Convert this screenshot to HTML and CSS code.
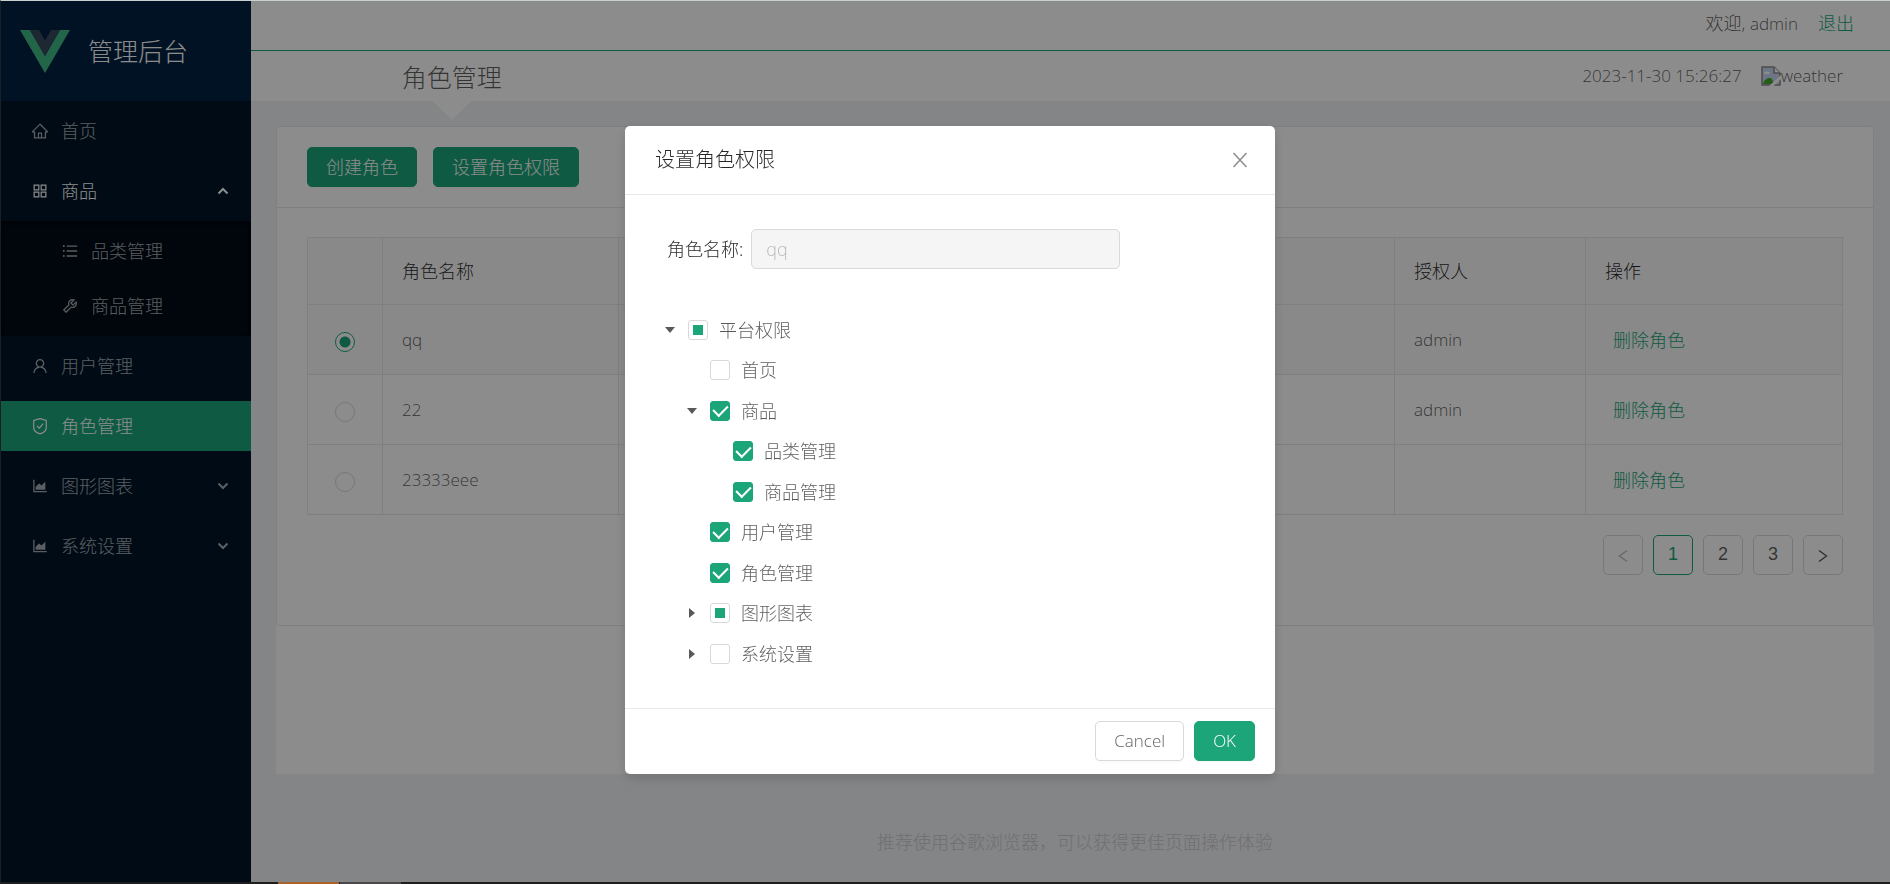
FILE: index.html
```html
<!DOCTYPE html>
<html lang="zh-CN">
<head>
<meta charset="utf-8">
<title>管理后台</title>
<link rel="stylesheet" href="styles.css">
</head>
<body>
<svg class="sprite" aria-hidden="true">
  <symbol id="home" viewBox="0 0 1024 1024"><path d="M946.500 505L560.100 118.800l-25.900-25.900a31.500 31.500 0 0 0-44.400 0L77.500 505a63.900 63.900 0 0 0-18.800 46c.4 35.200 29.700 63.300 64.900 63.300h42.500V940h691.800V614.300h43.400c17.100 0 33.200-6.700 45.300-18.800a63.600 63.600 0 0 0 18.700-45.300c0-17-6.700-33.100-18.800-45.200zM568 868H456V664h112v204zm217.900-325.700V868H632V640c0-22.100-17.900-40-40-40H432c-22.100 0-40 17.900-40 40v228H238.100V542.300h-96l370-369.700 23.100 23.100L882 542.300h-96.100z"/></symbol>
  <symbol id="apps" viewBox="0 0 1024 1024"><path d="M464 144H160c-8.800 0-16 7.200-16 16v304c0 8.800 7.200 16 16 16h304c8.800 0 16-7.200 16-16V160c0-8.800-7.200-16-16-16zm-52 268H212V212h200v200zm452-268H560c-8.800 0-16 7.200-16 16v304c0 8.800 7.200 16 16 16h304c8.800 0 16-7.200 16-16V160c0-8.800-7.200-16-16-16zm-52 268H612V212h200v200zM464 544H160c-8.800 0-16 7.200-16 16v304c0 8.800 7.200 16 16 16h304c8.800 0 16-7.200 16-16V560c0-8.800-7.200-16-16-16zm-52 268H212V612h200v200zm452-268H560c-8.800 0-16 7.200-16 16v304c0 8.800 7.200 16 16 16h304c8.800 0 16-7.200 16-16V560c0-8.800-7.200-16-16-16zm-52 268H612V612h200v200z"/></symbol>
  <symbol id="list" viewBox="0 0 1024 1024"><path d="M912 192H328c-4.400 0-8 3.600-8 8v56c0 4.400 3.600 8 8 8h584c4.400 0 8-3.600 8-8v-56c0-4.400-3.600-8-8-8zm0 284H328c-4.400 0-8 3.600-8 8v56c0 4.400 3.600 8 8 8h584c4.400 0 8-3.600 8-8v-56c0-4.400-3.600-8-8-8zm0 284H328c-4.400 0-8 3.600-8 8v56c0 4.400 3.600 8 8 8h584c4.400 0 8-3.600 8-8v-56c0-4.400-3.600-8-8-8zM104 228a56 56 0 1 0 112 0 56 56 0 1 0-112 0zm0 284a56 56 0 1 0 112 0 56 56 0 1 0-112 0zm0 284a56 56 0 1 0 112 0 56 56 0 1 0-112 0z"/></symbol>
  <symbol id="tool" viewBox="0 0 1024 1024"><path d="M876.600 239.500c-.5-.9-1.200-1.800-2-2.500-5-5-13.100-5-18.100 0L684.200 409.300l-67.900-67.900L788.700 169c.8-.8 1.400-1.600 2-2.500 3.600-6.100 1.600-13.900-4.500-17.500-98.200-58-226.800-44.700-311.300 39.700-67 67-89.200 162-66.500 247.400l-293 293c-3 3-2.800 7.900.3 11l169.700 169.700c3.100 3.100 8.100 3.300 11 .3l292.900-292.900c85.500 22.800 180.500.7 247.600-66.400 84.400-84.500 97.700-213.100 39.700-311.300zM786 499.800c-58.100 58.100-145.300 69.300-214.600 33.600l-8.800 8.800-.1-.1-274 274.100-79.200-79.200 230.100-230.100s0 .1.1.1l52.800-52.800c-35.700-69.300-24.500-156.500 33.600-214.600a184.200 184.200 0 0 1 144-53.500L537 318.900a32.050 32.050 0 0 0 0 45.300l124.500 124.500a32.050 32.050 0 0 0 45.300 0l132.800-132.800c3.700 51.800-14.400 104.800-53.600 143.900z"/></symbol>
  <symbol id="user" viewBox="0 0 1024 1024"><path d="M858.500 763.600a374 374 0 0 0-80.600-119.500 375.630 375.630 0 0 0-119.500-80.600c-.4-.2-.8-.3-1.200-.5C719.500 518 760 444.700 760 362c0-137-111-248-248-248S264 225 264 362c0 82.700 40.500 156 102.800 201.100-.4.2-.8.3-1.200.5-44.800 18.900-85 46-119.500 80.600a375.630 375.630 0 0 0-80.600 119.500A371.700 371.700 0 0 0 136 901.800a8 8 0 0 0 8 8.200h60c4.400 0 7.900-3.500 8-7.800 2-77.200 33-149.500 87.800-204.300 56.700-56.700 132-87.900 212.200-87.900s155.500 31.200 212.200 87.900C779 752.700 810 825 812 902.200c.1 4.400 3.600 7.800 8 7.800h60a8 8 0 0 0 8-8.200c-1-47.800-10.900-94.300-29.500-138.200zM512 534c-45.900 0-89.100-17.900-121.600-50.400S340 407.900 340 362c0-45.900 17.900-89.100 50.400-121.600S466.100 190 512 190s89.100 17.900 121.600 50.400S684 316.100 684 362c0 45.900-17.900 89.100-50.400 121.600S557.900 534 512 534z"/></symbol>
  <symbol id="shield" viewBox="0 0 18 18"><path d="M9 1.700L15.300 3.500V10.500C15.300 14 12.500 15.800 9 16.900C5.500 15.800 2.700 14 2.700 10.500V3.500zM6 8.800L8.300 11.100L12.200 6.600" fill="none" stroke="currentColor" stroke-width="1.200"/></symbol>
  <symbol id="chart" viewBox="0 0 1024 1024"><path d="M888 792H200V168c0-4.400-3.600-8-8-8h-56c-4.400 0-8 3.600-8 8v688c0 4.400 3.600 8 8 8h752c4.400 0 8-3.600 8-8v-56c0-4.400-3.600-8-8-8zm-616-64h536c4.400 0 8-3.600 8-8V284c0-7.200-8.700-10.700-13.700-5.700L592 488.600l-125.400-124a8.030 8.030 0 0 0-11.300 0l-189 189.600a7.870 7.870 0 0 0-2.300 5.600V720c0 4.400 3.600 8 8 8z"/></symbol>
  <symbol id="up" viewBox="0 0 12 12"><path d="M1.500 8.500L6 4L10.500 8.500" fill="none" stroke="currentColor" stroke-width="2"/></symbol>
  <symbol id="down" viewBox="0 0 12 12"><path d="M1.500 3.500L6 8L10.500 3.500" fill="none" stroke="currentColor" stroke-width="2"/></symbol>
  <symbol id="left" viewBox="0 0 14 14"><path d="M11 1.500L3.500 7L11 12.500" fill="none" stroke="currentColor" stroke-width="1.400"/></symbol>
  <symbol id="right" viewBox="0 0 14 14"><path d="M3 1.500L10.500 7L3 12.500" fill="none" stroke="currentColor" stroke-width="1.400"/></symbol>
</svg>

<div class="app">
  <aside class="sidebar">
    <div class="logo">
      <svg class="logo-mark" viewBox="0 0 50 43"><path d="M0 0H10L25 26L40 0H50L25 43z" fill="#41b883"/><path d="M10 0H19L25 10.500L31 0H40L25 26z" fill="#35495e"/></svg>
      <h1 class="logo-text">管理后台</h1>
    </div>
    <nav class="menu">
      <a class="item" href="#"><svg class="icon"><use href="#home"/></svg>首页</a>
      <a class="item open" href="#"><svg class="icon"><use href="#apps"/></svg>商品<svg class="arrow"><use href="#up"/></svg></a>
      <div class="submenu">
        <a class="item sub" href="#"><svg class="icon"><use href="#list"/></svg>品类管理</a>
        <a class="item sub" href="#"><svg class="icon"><use href="#tool"/></svg>商品管理</a>
      </div>
      <a class="item" href="#"><svg class="icon"><use href="#user"/></svg>用户管理</a>
      <a class="item selected" href="#"><svg class="icon"><use href="#shield"/></svg>角色管理</a>
      <a class="item" href="#"><svg class="icon"><use href="#chart"/></svg>图形图表<svg class="arrow"><use href="#down"/></svg></a>
      <a class="item" href="#"><svg class="icon"><use href="#chart"/></svg>系统设置<svg class="arrow"><use href="#down"/></svg></a>
    </nav>
  </aside>

  <div class="main">
    <header class="header">
      <div class="header-top"><span>欢迎, <span class="latin">admin</span></span><a class="link" href="#">退出</a></div>
      <div class="header-bottom">
        <h2 class="page-title">角色管理</h2>
        <div class="status">
          <time class="latin" datetime="2023-11-30T15:26:27">2023-11-30 15:26:27</time>
          <span class="weather">
            <svg class="broken" viewBox="0 0 20 20"><path d="M1 1H13L19 7V19H1z" fill="#c6d7f5" stroke="#8b8b8b" stroke-width="1.500"/><path d="M3 8A3 2.500 0 0 1 9 8z" fill="#fff"/><path d="M2 18C3 14 6 11.500 9 12C11 12.300 12 14 12.500 18z" fill="#46a928"/><path d="M13 1V7H19" fill="#fff" stroke="#8b8b8b" stroke-width="1.500"/><path d="M8 20L20 9V13L12.500 20z" fill="#fff"/></svg><span class="latin">weather</span>
          </span>
        </div>
      </div>
    </header>

    <main class="content">
      <section class="card">
        <div class="card-head">
          <button class="btn primary" type="button">创建角色</button>
          <button class="btn primary" type="button">设置角色权限</button>
        </div>
        <div class="card-body">
          <table class="table">
            <colgroup><col class="c-radio"><col class="c-name"><col><col class="c-auth"><col class="c-action"></colgroup>
            <thead><tr><th></th><th>角色名称</th><th></th><th>授权人</th><th>操作</th></tr></thead>
            <tbody>
              <tr class="active"><td class="pick"><input class="radio" type="radio" name="role" aria-label="qq" checked></td><td class="latin">qq</td><td></td><td class="latin">admin</td><td><a class="link action" href="#">删除角色</a></td></tr>
              <tr><td class="pick"><input class="radio" type="radio" name="role" aria-label="22"></td><td class="latin">22</td><td></td><td class="latin">admin</td><td><a class="link action" href="#">删除角色</a></td></tr>
              <tr><td class="pick"><input class="radio" type="radio" name="role" aria-label="23333eee"></td><td class="latin">23333eee</td><td></td><td></td><td><a class="link action" href="#">删除角色</a></td></tr>
            </tbody>
          </table>
          <nav class="pager">
            <button class="page off" type="button" aria-label="上一页"><svg class="chev"><use href="#left"/></svg></button>
            <button class="page current" type="button">1</button>
            <button class="page" type="button">2</button>
            <button class="page" type="button">3</button>
            <button class="page" type="button" aria-label="下一页"><svg class="chev"><use href="#right"/></svg></button>
          </nav>
        </div>
      </section>
    </main>
    <footer class="footer">推荐使用谷歌浏览器，可以获得更佳页面操作体验</footer>
  </div>
</div>
<div class="taskbar"><span class="task orange"></span><span class="task gray"></span></div>

<div class="mask">
  <div class="modal" role="dialog" aria-modal="true" aria-labelledby="dlg">
    <div class="modal-head">
      <h3 class="modal-title" id="dlg">设置角色权限</h3>
      <button class="close" type="button" aria-label="关闭"><svg class="close-icon" viewBox="0 0 16 16"><path d="M1.500 1L14.500 15M14.500 1L1.500 15" fill="none" stroke="currentColor" stroke-width="1.500"/></svg></button>
    </div>
    <div class="modal-body">
      <div class="field"><label for="role-name">角色名称:</label><input class="input" id="role-name" type="text" value="qq" disabled></div>
      <ul class="tree">
        <li class="node l0"><span class="caret down"></span><label class="check"><input class="box part" type="checkbox">平台权限</label></li>
        <li class="node l1"><span class="caret"></span><label class="check"><input class="box" type="checkbox">首页</label></li>
        <li class="node l1"><span class="caret down"></span><label class="check"><input class="box" type="checkbox" checked>商品</label></li>
        <li class="node l2"><span class="caret"></span><label class="check"><input class="box" type="checkbox" checked>品类管理</label></li>
        <li class="node l2"><span class="caret"></span><label class="check"><input class="box" type="checkbox" checked>商品管理</label></li>
        <li class="node l1"><span class="caret"></span><label class="check"><input class="box" type="checkbox" checked>用户管理</label></li>
        <li class="node l1"><span class="caret"></span><label class="check"><input class="box" type="checkbox" checked>角色管理</label></li>
        <li class="node l1"><span class="caret side"></span><label class="check"><input class="box part" type="checkbox">图形图表</label></li>
        <li class="node l1"><span class="caret side"></span><label class="check"><input class="box" type="checkbox">系统设置</label></li>
      </ul>
    </div>
    <div class="modal-foot">
      <button class="btn latin" type="button">Cancel</button>
      <button class="btn primary latin" type="button">OK</button>
    </div>
  </div>
</div>
</body>
</html>
```
FILE: styles.css
```css
* { box-sizing: border-box; }

:root {
  --green: #1da57a;
  --text: rgba(0, 0, 0, 0.65);
  --heading: rgba(0, 0, 0, 0.85);
  --line: #e8e8e8;
}

body {
  margin: 0;
  min-height: 100vh;
  display: flex;
  flex-direction: column;
  border-top: 1px solid #c8d0d2;
  border-left: 1px solid #182025;
  background: #f0f2f5;
  color: var(--text);
  font-family: "Open Sans", "Noto Sans CJK SC", sans-serif;
  font-size: 18px;
  font-weight: 300;
  line-height: 26px;
}

button, input { font: inherit; color: inherit; }
h1, h2, h3 { margin: 0; font-weight: 300; }
a { text-decoration: none; }
.latin { font-size: 17px; }
.sprite { position: absolute; width: 0; height: 0; }

.app { flex: 1; display: flex; }

/* Sidebar */
.sidebar { flex: 0 0 250px; background: #001529; }
.logo {
  height: 100px;
  display: flex;
  align-items: center;
  gap: 18px;
  padding-left: 19px;
  background: #002140;
}
.logo-mark { width: 50px; height: 43px; }
.logo-text { color: #fff; font-size: 25px; line-height: 38px; }
.menu { display: flex; flex-direction: column; }
.item {
  height: 50px;
  margin: 5px 0;
  padding: 0 22px 0 30px;
  display: flex;
  align-items: center;
  gap: 12px;
  color: rgba(255, 255, 255, 0.65);
}
.item.open { color: #fff; }
.item.selected { background: var(--green); color: #fff; }
.item.sub { padding-left: 60px; }
.submenu {
  display: flow-root;
  background: #000c17;
  box-shadow: inset 0 2px 8px rgba(0, 0, 0, 0.45);
}
.icon { width: 18px; height: 18px; fill: currentColor; }
.arrow { width: 12px; height: 12px; margin-left: auto; }

/* Header */
.main { flex: 1; min-width: 0; display: flex; flex-direction: column; }
.header { background: #fff; }
.header-top {
  height: 50px;
  padding: 0 36px 5px;
  display: flex;
  align-items: center;
  justify-content: flex-end;
  gap: 20px;
  border-bottom: 1px solid var(--green);
}
.header-bottom { height: 50px; display: flex; justify-content: space-between; }
.page-title {
  position: relative;
  width: 25%;
  padding-right: 8px;
  text-align: center;
  font-size: 25px;
  line-height: 52px;
}
.page-title::after {
  content: "";
  position: absolute;
  top: 50px;
  left: calc(50% - 23px);
  border: 19px solid transparent;
  border-top-color: #fff;
}
.status { display: flex; align-items: center; gap: 19px; padding: 0 47px 0 0; }
.weather { display: flex; align-items: center; }
.broken { width: 20px; height: 20px; }
.link { color: var(--green); }

/* Content */
.content {
  flex: 0 0 auto;
  min-height: 648px;
  margin: 25px 16px 0 25px;
  background: #fff;
}
.card { border: 1px solid var(--line); border-radius: 3px; }
.card-head {
  display: flex;
  gap: 16px;
  padding: 20px 30px;
  border-bottom: 1px solid var(--line);
}
.card-body { padding: 29px 30px 50px; }
.btn {
  height: 40px;
  padding: 0 18px;
  border: 1px solid #d9d9d9;
  border-radius: 5px;
  background: #fff;
  box-shadow: 0 2px 0 rgba(0, 0, 0, 0.02);
}
.btn.primary { border-color: var(--green); background: var(--green); color: #fff; }

.table {
  width: 100%;
  table-layout: fixed;
  border-collapse: collapse;
}
.c-radio { width: 75px; }
.c-name { width: 236px; }
.c-auth { width: 191px; }
.c-action { width: 257px; }
.table th, .table td { height: 70px; padding: 0 19px; border: 1px solid var(--line); text-align: left; }
.table th { height: 67px; background: #fafafa; color: var(--heading); font-weight: 300; }
.active { background: #fafafa; }
.table .pick { padding: 0; text-align: center; }
.action { padding: 0 8px; }
.radio {
  appearance: none;
  width: 20px;
  height: 20px;
  margin: 0;
  border: 1px solid #d9d9d9;
  border-radius: 50%;
  background: #fff;
  vertical-align: middle;
}
.radio:checked {
  border-color: var(--green);
  background: radial-gradient(circle, var(--green) 5px, #fff 6px);
}
.pager { display: flex; justify-content: flex-end; gap: 10px; margin-top: 20px; }
.page {
  width: 40px;
  height: 40px;
  padding: 0 0 2px;
  border: 1px solid #d9d9d9;
  border-radius: 5px;
  background: #fff;
  font-family: "Liberation Sans", Arial, sans-serif;
  font-weight: 400;
}
.page.current { border-color: var(--green); color: var(--green); }
.page.off { color: rgba(0, 0, 0, 0.25); }
.chev { width: 14px; height: 14px; vertical-align: -3px; }

.footer { padding: 55px 0 27px 9px; text-align: center; color: #ccc; }

.taskbar { flex: 0 0 2px; display: flex; gap: 1px; padding-left: 277px; background: #1e1e1e; position: relative; z-index: 3; }
.task { width: 61px; }
.orange { background: #a8632c; }
.gray { background: #4a4848; }

/* Dialog */
.mask {
  position: fixed;
  inset: 1px 0 0 1px;
  z-index: 2;
  display: flex;
  justify-content: center;
  align-items: flex-start;
  padding: 125px 0 0 9px;
  background: rgba(0, 0, 0, 0.45);
}
.modal {
  width: 650px;
  border-radius: 5px;
  background: #fff;
  box-shadow: 0 4px 12px rgba(0, 0, 0, 0.15);
}
.modal-head {
  height: 69px;
  padding: 0 27px 0 30px;
  display: flex;
  align-items: center;
  justify-content: space-between;
  border-bottom: 1px solid var(--line);
}
.modal-title { color: var(--heading); font-size: 20px; line-height: 28px; }
.close { display: flex; padding: 0; border: 0; background: none; color: rgba(0, 0, 0, 0.45); }
.close-icon { width: 16px; height: 16px; }
.modal-body { padding: 34px 30px 34px 38px; }
.field {
  display: flex;
  align-items: center;
  gap: 8px;
  padding-left: 4px;
  color: var(--heading);
}
.input {
  width: 369px;
  height: 40px;
  padding: 0 14px;
  border: 1px solid #d9d9d9;
  border-radius: 5px;
  background: #f5f5f5;
  color: rgba(0, 0, 0, 0.25);
}
.tree { margin: 40px 0 0; padding: 0; list-style: none; }
.node { height: 40px; display: flex; align-items: center; }
.node:nth-child(odd) { height: 41px; }
.l1 { padding-left: 22px; }
.l2 { padding-left: 45px; }
.caret { width: 14px; margin-right: 11px; display: flex; justify-content: center; }
.caret.down::before {
  content: "";
  border: 5px solid transparent;
  border-top: 6px solid rgba(0, 0, 0, 0.65);
  border-bottom: 0;
}
.caret.side::before {
  content: "";
  border: 5px solid transparent;
  border-left: 6px solid rgba(0, 0, 0, 0.65);
  border-right: 0;
}
.check { display: flex; align-items: center; gap: 11px; }
.box {
  appearance: none;
  width: 20px;
  height: 20px;
  margin: 0;
  display: grid;
  place-items: center;
  border: 1px solid #d9d9d9;
  border-radius: 3px;
  background: #fff;
}
.box:checked { border-color: var(--green); background: var(--green); }
.box:checked::before {
  content: "";
  width: 7px;
  height: 12px;
  margin-bottom: 3px;
  border: solid #fff;
  border-width: 0 2px 2px 0;
  transform: rotate(45deg);
}
.part::before { content: ""; width: 10px; height: 10px; background: var(--green); }
.modal-foot {
  display: flex;
  justify-content: flex-end;
  gap: 10px;
  padding: 12px 20px 13px;
  border-top: 1px solid var(--line);
}
```
